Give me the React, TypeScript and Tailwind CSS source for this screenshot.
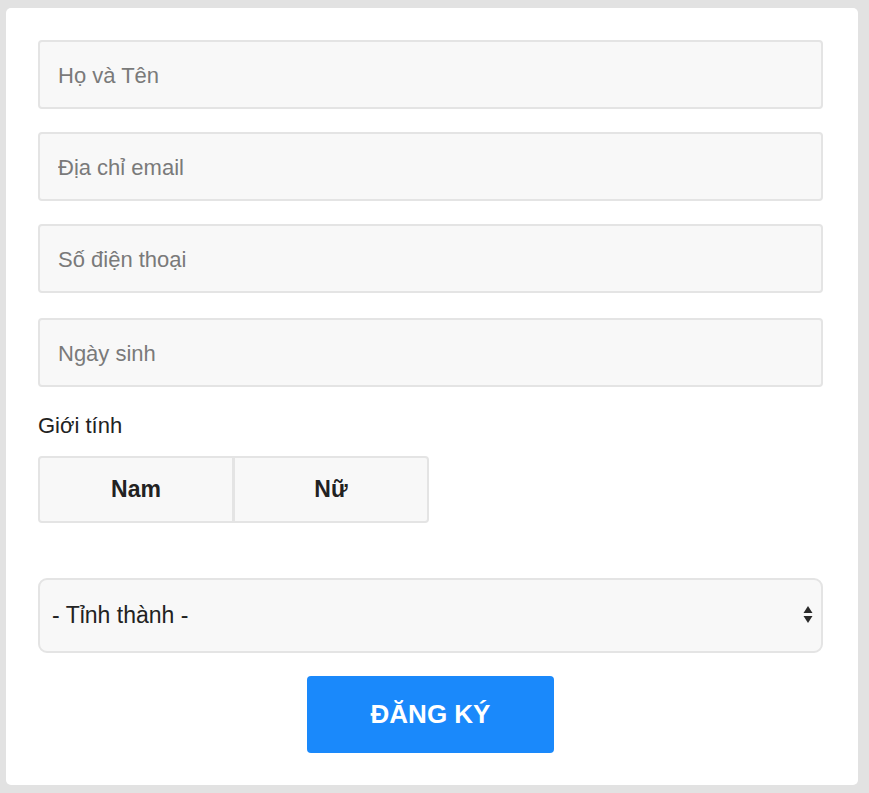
import { useState } from "react";

const fieldClass =
  "w-full h-[69px] rounded-[4px] border-2 border-[#e4e4e4] bg-[#f8f8f8] px-[18px] pt-[2px] text-[22px] text-[#333] placeholder:text-[#7a7a7a] outline-none";

export default function App() {
  const [gender, setGender] = useState<string>("");

  return (
    <div className="min-h-[793px] bg-[#e2e2e2] pt-[8px] pl-[6px] font-['Liberation_Sans',Arial,sans-serif]">
      <div className="w-[852px] rounded-[5px] bg-white pl-[32px] pr-[35px] pt-[32px] pb-[32px]">
        <form className="flex flex-col" onSubmit={(e) => e.preventDefault()}>
          <input className={fieldClass} placeholder="Họ và Tên" />
          <input className={`${fieldClass} mt-[23px]`} placeholder="Địa chỉ email" />
          <input className={`${fieldClass} mt-[23px]`} placeholder="Số điện thoại" />
          <input className={`${fieldClass} mt-[25px] h-[68px]`} placeholder="Ngày sinh" />

          <label className="mt-[25px] text-[22px] leading-[28px] text-[#222]">Giới tính</label>
          <div className="mt-[16px] flex w-[391px] h-[67px] rounded-[4px] border-2 border-[#e4e4e4] bg-[#f8f8f8] overflow-hidden">
            {["Nam", "Nữ"].map((g, i) => (
              <button
                key={g}
                type="button"
                onClick={() => setGender(g)}
                className={`flex-1 text-[23px] font-bold text-[#222] ${i > 0 ? "border-l-[3px] border-[#e4e4e4]" : ""} ${gender === g ? "bg-[#ececec]" : ""}`}
              >
                {g}
              </button>
            ))}
          </div>

          <div className="relative mt-[55px]">
            <select className="w-full h-[75px] appearance-none rounded-[9px] border-2 border-[#e4e4e4] bg-[#f8f8f8] pl-[12px] text-[23px] text-[#222] outline-none">
              <option>- Tỉnh thành -</option>
              <option>Hà Nội</option>
              <option>Hồ Chí Minh</option>
              <option>Đà Nẵng</option>
            </select>
            <svg
              className="pointer-events-none absolute right-[10px] top-[26px]"
              width="10"
              height="22"
              viewBox="0 0 10 22"
            >
              <path d="M5 2 L9.5 9 L0.5 9 Z" fill="#2a2a2a" />
              <path d="M0.5 12 L9.5 12 L5 19 Z" fill="#2a2a2a" />
            </svg>
          </div>

          <button
            type="submit"
            className="mx-auto mt-[23px] h-[77px] w-[247px] rounded-[4px] bg-[#1a89fb] text-[26px] font-bold text-white"
          >
            ĐĂNG KÝ
          </button>
        </form>
      </div>
    </div>
  );
}
